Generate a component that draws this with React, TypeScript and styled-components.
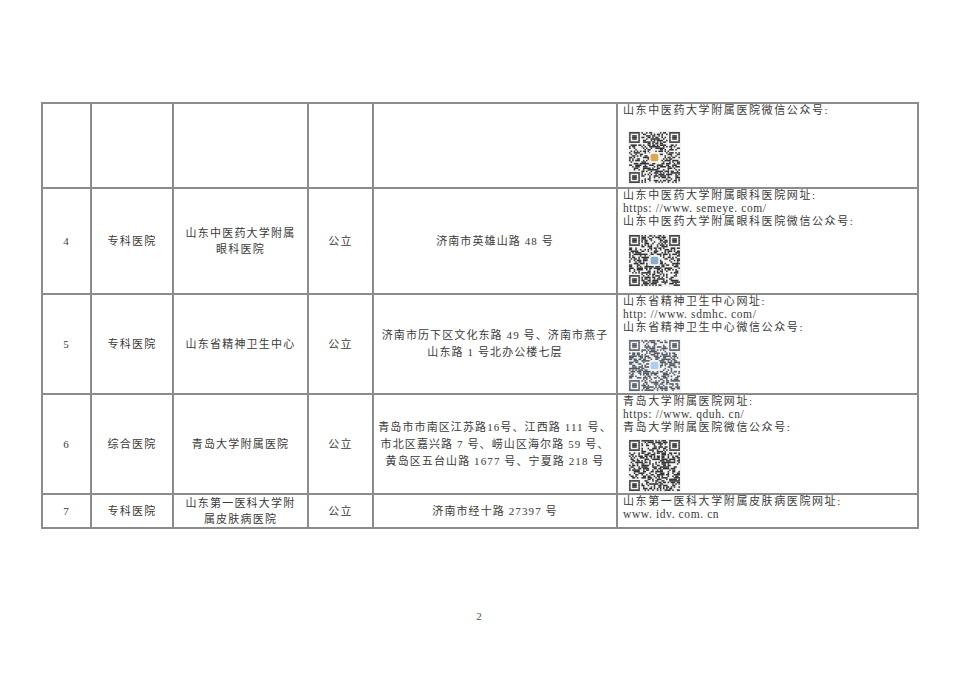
import React from 'react'
import styled, { createGlobalStyle } from 'styled-components'

const GlobalStyle = createGlobalStyle`
html, body {
  margin: 0;
  padding: 0;
  background: #ffffff;
}
body {
  font-family: "Liberation Serif", "Noto Sans CJK SC", serif;
  color: #3c3c3c;
}
`

interface QrSpec {
  seed: number;
  logo?: string;
  tint?: string;
}

interface RowData {
  height: number;
  no?: string;
  kind?: string;
  name?: string[];
  nature?: string;
  address?: string[];
  info: string[];
  qr?: QrSpec;
  qrGap?: number;
}

const rows: RowData[] = [
  {
    height: 85,
    info: ['山东中医药大学附属医院微信公众号:'],
    qr: { seed: 11, logo: '#d9a13a' },
    qrGap: 14,
  },
  {
    height: 106,
    no: '4',
    kind: '专科医院',
    name: ['山东中医药大学附属', '眼科医院'],
    nature: '公立',
    address: ['济南市英雄山路 48 号'],
    info: ['山东中医药大学附属眼科医院网址:', 'https: //www. semeye. com/', '山东中医药大学附属眼科医院微信公众号:'],
    qr: { seed: 23, logo: '#7fa6cf' },
    qrGap: 6,
  },
  {
    height: 100,
    no: '5',
    kind: '专科医院',
    name: ['山东省精神卫生中心'],
    nature: '公立',
    address: ['济南市历下区文化东路 49 号、济南市燕子', '山东路 1 号北办公楼七层'],
    info: ['山东省精神卫生中心网址:', 'http: //www. sdmhc. com/', '山东省精神卫生中心微信公众号:'],
    qr: { seed: 37, logo: '#a9c8e6', tint: '#3e4652' },
    qrGap: 5,
  },
  {
    height: 100,
    no: '6',
    kind: '综合医院',
    name: ['青岛大学附属医院'],
    nature: '公立',
    address: ['青岛市市南区江苏路16号、江西路 111 号、', '市北区嘉兴路 7 号、崂山区海尔路 59 号、', '黄岛区五台山路 1677 号、宁夏路 218 号'],
    info: ['青岛大学附属医院网址:', 'https: //www. qduh. cn/', '青岛大学附属医院微信公众号:'],
    qr: { seed: 53 },
    qrGap: 5,
  },
  {
    height: 34,
    no: '7',
    kind: '专科医院',
    name: ['山东第一医科大学附', '属皮肤病医院'],
    nature: '公立',
    address: ['济南市经十路 27397 号'],
    info: ['山东第一医科大学附属皮肤病医院网址:', 'www. idv. com. cn'],
  },
]

// small seeded random so the QR patterns stay the same on every render
const mulberry = (seed: number) => {
  let a = seed
  return () => {
    a |= 0
    a = (a + 0x6d2b79f5) | 0
    let t = Math.imul(a ^ (a >>> 15), 1 | a)
    t = (t + Math.imul(t ^ (t >>> 7), 61 | t)) ^ t
    return ((t ^ (t >>> 14)) >>> 0) / 4294967296
  }
}

const N = 33

const buildGrid = (seed: number) => {
  const rnd = mulberry(seed)
  const g: boolean[][] = []
  for (let y = 0; y < N; y++) {
    g.push([])
    for (let x = 0; x < N; x++) g[y].push(rnd() > 0.5)
  }
  const finder = (ox: number, oy: number) => {
    for (let y = -1; y < 8; y++) {
      for (let x = -1; x < 8; x++) {
        const gx = ox + x
        const gy = oy + y
        if (gx < 0 || gy < 0 || gx >= N || gy >= N) continue
        const inside = x >= 0 && y >= 0 && x < 7 && y < 7
        const ring = inside && (x === 0 || y === 0 || x === 6 || y === 6)
        const core = x >= 2 && x <= 4 && y >= 2 && y <= 4
        g[gy][gx] = ring || core
      }
    }
  }
  finder(0, 0)
  finder(N - 7, 0)
  finder(0, N - 7)
  return g
}

const QrCode: React.FC<QrSpec> = ({ seed, logo, tint }) => {
  const grid = buildGrid(seed)
  const cells: React.ReactNode[] = []
  grid.forEach((row, y) => {
    let start = -1
    row.forEach((on, x) => {
      if (on && start < 0) start = x
      if ((!on || x === N - 1) && start >= 0) {
        const end = on ? x + 1 : x
        cells.push(<rect key={`${y}-${start}`} x={start} y={y} width={end - start} height={1} />)
        start = -1
      }
    })
  })
  const c = (N - 7) / 2
  return (
    <svg width="53" height="53" viewBox={`-0.7 -0.7 ${N + 1.4} ${N + 1.4}`}>
      <rect x="-0.7" y="-0.7" width={N + 1.4} height={N + 1.4} fill="#f2f2f2" />
      <g fill={tint || '#1e1e1e'}>{cells}</g>
      {logo && (
        <>
          <rect x={c} y={c} width="7" height="7" rx="1.4" fill="#f6f6f6" />
          <rect x={c + 1} y={c + 1} width="5" height="5" rx="1.2" fill={logo} />
        </>
      )}
    </svg>
  )
}

const Page = styled.div`
  width: 960px;
  height: 679px;
  box-sizing: border-box;
  padding: 102px 0 0 41px;
  display: flex;
  flex-direction: column;
`

const Table = styled.table`
  border-collapse: collapse;
  table-layout: fixed;
  width: 876px;
`

const Col = styled.col<{ w: number }>`
  width: ${p => p.w}px;
`

const Row = styled.tr<{ h: number }>`
  height: ${p => p.h}px;
`

const Cell = styled.td`
  border: 2px solid #8c8c8c;
  padding: 0 3px;
  text-align: center;
  vertical-align: middle;
  font-size: 11px;
  letter-spacing: 1.2px;
  line-height: 16px;
  color: #3a3a3a;
`

const AddressCell = styled(Cell)`
  line-height: 17px;
  letter-spacing: 1.1px;
`

const InfoCell = styled(Cell)`
  text-align: left;
  vertical-align: top;
  padding: 0 5px;
  line-height: 13px;
  letter-spacing: 1.6px;
`

const Url = styled.div`
  font-family: "Liberation Serif", serif;
  font-size: 11.5px;
  letter-spacing: 0.6px;
`

const QrBox = styled.div<{ gap: number }>`
  margin-top: ${p => p.gap}px;
  margin-left: 5px;
  width: 53px;
  height: 53px;
  opacity: 0.9;
`

const PageNo = styled.div`
  margin-top: 81px;
  width: 876px;
  text-align: center;
  font-size: 11px;
  color: #555;
`

const isUrl = (s: string) => /^(https?:|www\.)/.test(s)

export default function App() {
  return (
    <>
      <GlobalStyle />
      <Page>
        <Table>
          <colgroup>
            <Col w={49} />
            <Col w={82} />
            <Col w={135} />
            <Col w={65} />
            <Col w={244} />
            <Col w={301} />
          </colgroup>
          <tbody>
            {rows.map((r, i) => (
              <Row key={i} h={r.height}>
                <Cell>{r.no}</Cell>
                <Cell>{r.kind}</Cell>
                <Cell>
                  {r.name?.map(n => (
                    <div key={n}>{n}</div>
                  ))}
                </Cell>
                <Cell>{r.nature}</Cell>
                <AddressCell>
                  {r.address?.map(a => (
                    <div key={a}>{a}</div>
                  ))}
                </AddressCell>
                <InfoCell>
                  {r.info.map(t => (isUrl(t) ? <Url key={t}>{t}</Url> : <div key={t}>{t}</div>))}
                  {r.qr && (
                    <QrBox gap={r.qrGap || 6}>
                      <QrCode {...r.qr} />
                    </QrBox>
                  )}
                </InfoCell>
              </Row>
            ))}
          </tbody>
        </Table>
        <PageNo>2</PageNo>
      </Page>
    </>
  )
}
